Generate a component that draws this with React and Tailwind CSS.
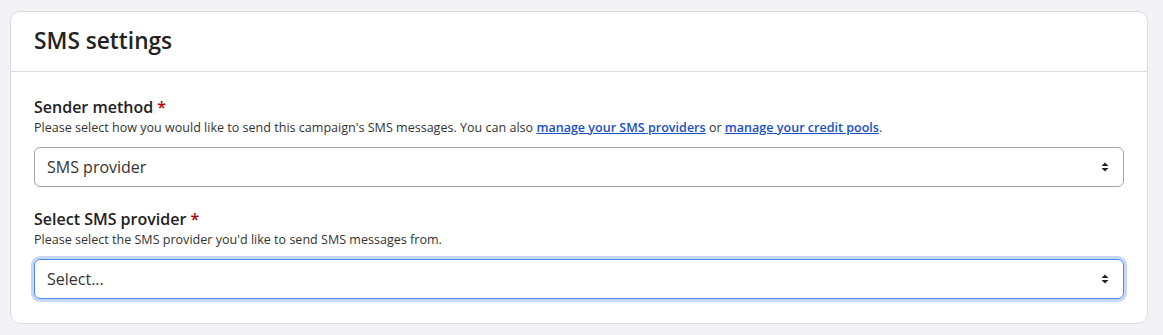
import React from 'react';

function Chevrons() {
  return (
    <svg width="10" height="12" viewBox="0 0 10 12" className="text-[#222]">
      <path d="M5 1.5 L8.5 5 H1.5 Z" fill="currentColor" />
      <path d="M5 10.5 L8.5 7 H1.5 Z" fill="currentColor" />
    </svg>
  );
}

function Field({ label, help, value, focused }) {
  return (
    <div>
      <label className="block text-[16px] leading-[22px] font-semibold text-[#222]">
        {label} <span className="text-[#b00000]">*</span>
      </label>
      <p className="text-[12.55px] leading-[18px] text-[#333] mt-[1px]">{help}</p>
      <div
        className={
          focused
            ? 'mt-[10px] h-[40px] rounded-[6px] border border-[#4a8af4] ring-[3px] ring-[#c5d7f5] flex items-center justify-between pl-[12px] pr-[13px]'
            : 'mt-[10px] h-[40px] rounded-[6px] border border-[#a5a5ad] flex items-center justify-between pl-[12px] pr-[13px]'
        }
      >
        <span className="text-[16px] text-[#333]">{value}</span>
        <Chevrons />
      </div>
    </div>
  );
}

export default function App() {
  return (
    <div className="min-h-screen bg-[#f2f2f7] pt-[11px] pl-[10px] pr-[15px] pb-[12px] font-['Open_Sans',_sans-serif]">
      <div className="bg-white rounded-[10px] border border-[#dcdce0]">
        {/* Header */}
        <div className="h-[60px] flex items-center px-[23px] border-b border-[#dcdce0]">
          <h2 className="text-[22.7px] font-semibold text-[#222]">SMS settings</h2>
        </div>

        {/* Body */}
        <div className="px-[23px] pt-[24px] pb-[24px] flex flex-col gap-[21px]">
          <Field
            label="Sender method"
            value="SMS provider"
            help={
              <>
                Please select how you would like to send this campaign's SMS messages. You can also{' '}
                <a href="#" className="text-[#1a4fc4] font-semibold underline">manage your SMS providers</a> or{' '}
                <a href="#" className="text-[#1a4fc4] font-semibold underline">manage your credit pools</a>.
              </>
            }
          />
          <Field
            label="Select SMS provider"
            value="Select..."
            focused
            help="Please select the SMS provider you'd like to send SMS messages from."
          />
        </div>
      </div>
    </div>
  );
}
